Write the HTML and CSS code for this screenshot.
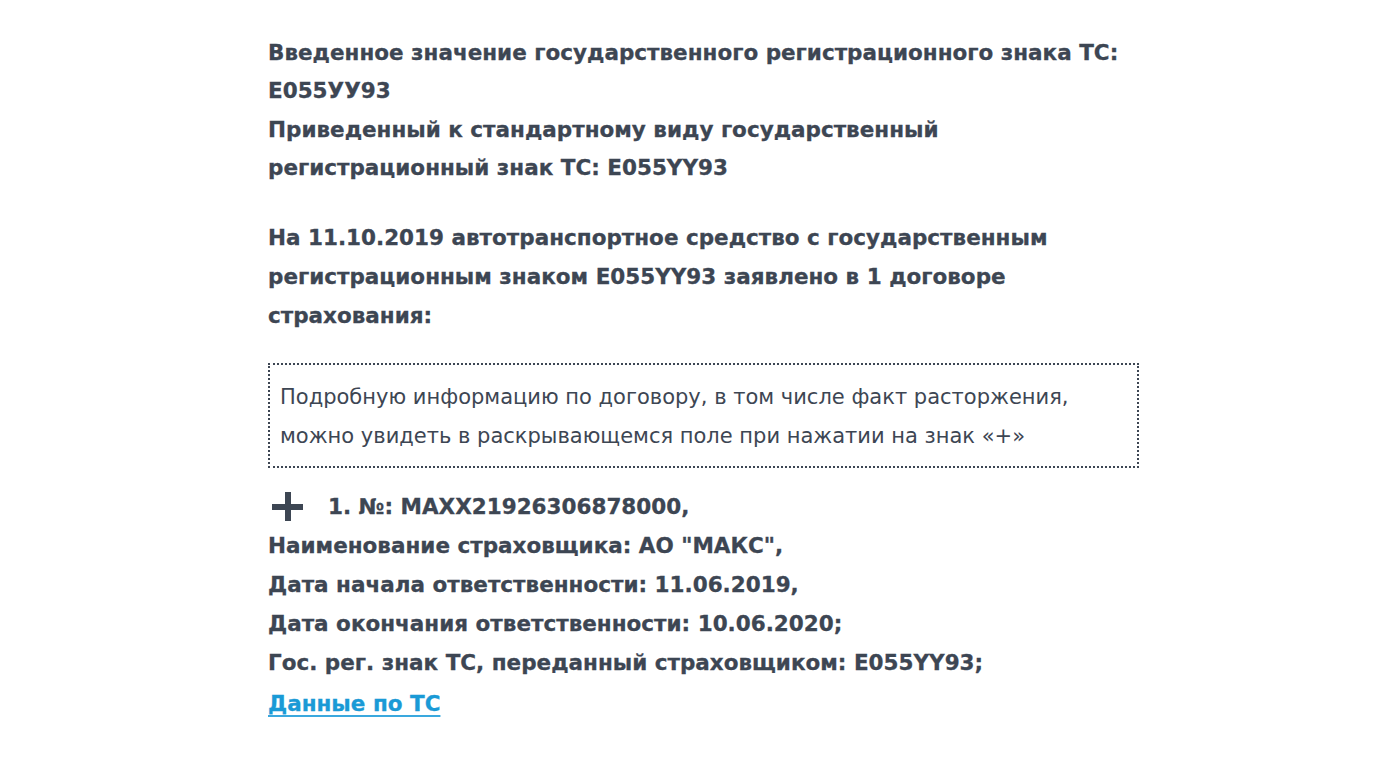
FILE: index.html
```html
<!DOCTYPE html>
<html lang="ru">
<head>
<meta charset="utf-8">
<title>Результат проверки</title>
<link rel="stylesheet" href="styles.css">
</head>
<body>
<div class="page">
  <div class="head">
    <p class="b">Введенное значение государственного регистрационного знака ТС:<br>Е055УУ93</p>
    <p class="b second">Приведенный к стандартному виду государственный<br>регистрационный знак ТС: E055YY93</p>
  </div>
  <p class="b summary">На 11.10.2019 автотранспортное средство с государственным<br>регистрационным знаком E055YY93 заявлено в 1 договоре<br>страхования:</p>
  <div class="note">Подробную информацию по договору, в том числе факт расторжения,<br>можно увидеть в раскрывающемся поле при нажатии на знак «+»</div>
  <div class="policy b">
    <div class="first"><span class="plus"></span><span>1. №: MAXX21926306878000,</span></div>
    <div>Наименование страховщика: АО "МАКС",</div>
    <div>Дата начала ответственности: 11.06.2019,</div>
    <div>Дата окончания ответственности: 10.06.2020;</div>
    <div>Гос. рег. знак ТС, переданный страховщиком: E055YY93;</div>
    <a class="link" href="#">Данные по ТС</a>
  </div>
</div>
</body>
</html>
```
FILE: styles.css
```css
html, body {
  margin: 0;
  padding: 0;
  background: #ffffff;
}
body {
  font-family: "DejaVu Sans", Verdana, sans-serif;
  font-size: 21px;
  line-height: 39px;
  color: #3d4653;
}
.page {
  width: 871px;
  margin-left: 268px;
  padding-top: 34px;
}
p {
  margin: 0;
}
.b {
  font-weight: bold;
  font-size: 21.5px;
  -webkit-text-stroke: 0.3px #3d4653;
}
.head {
  line-height: 38px;
}
.second {
  margin-top: 1px;
}
.summary {
  margin-top: 31px;
}
.note {
  margin-top: 28px;
  border: 2px dotted #3d4653;
  padding: 13px 10px 10px;
  font-weight: normal;
}
.policy {
  margin-top: 19px;
  display: flex;
  flex-direction: column;
}
.first {
  display: flex;
  align-items: center;
  gap: 25px;
}
.plus {
  position: relative;
  width: 31px;
  height: 29px;
  margin-left: 4px;
  flex: none;
}
.plus::before, .plus::after {
  content: "";
  position: absolute;
  background: #3d4653;
}
.plus::before {
  left: 0;
  right: 0;
  top: 12px;
  height: 6px;
}
.plus::after {
  top: 0;
  bottom: 0;
  left: 13px;
  width: 6px;
}
.link {
  margin-top: 2px;
  color: #1a9ad6;
  -webkit-text-stroke: 0.3px #1a9ad6;
  text-decoration: underline;
  text-decoration-color: #3aa8de;
  text-underline-offset: 4px;
  text-decoration-thickness: 2px;
  align-self: flex-start;
}
```
